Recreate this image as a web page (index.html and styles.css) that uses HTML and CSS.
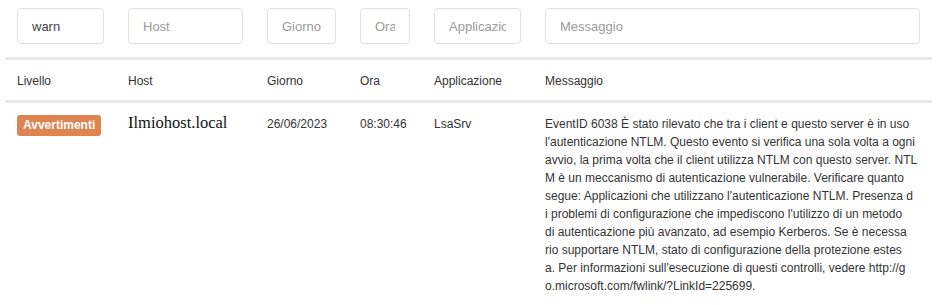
FILE: index.html
```html
<!DOCTYPE html>
<html lang="it">
<head>
<meta charset="utf-8">
<title>Log</title>
<link rel="stylesheet" href="styles.css">
</head>
<body>
<div class="wrap">
<table class="log">
  <colgroup>
    <col class="c-level"><col class="c-host"><col class="c-day"><col class="c-time"><col class="c-app"><col class="c-msg">
  </colgroup>
  <thead>
    <tr class="filters">
      <td><input class="filter" type="text" value="warn"></td>
      <td><input class="filter" type="text" placeholder="Host"></td>
      <td><input class="filter" type="text" placeholder="Giorno"></td>
      <td><input class="filter" type="text" placeholder="Ora"></td>
      <td><input class="filter" type="text" placeholder="Applicazione"></td>
      <td><input class="filter" type="text" placeholder="Messaggio"></td>
    </tr>
    <tr class="heads">
      <th>Livello</th>
      <th>Host</th>
      <th>Giorno</th>
      <th>Ora</th>
      <th>Applicazione</th>
      <th>Messaggio</th>
    </tr>
  </thead>
  <tbody>
    <tr class="row">
      <td><span class="badge">Avvertimenti</span></td>
      <td><span class="host">Ilmiohost.local</span></td>
      <td>26/06/2023</td>
      <td>08:30:46</td>
      <td>LsaSrv</td>
      <td class="msg">EventID 6038 È stato rilevato che tra i client e questo server è in uso<br>l'autenticazione NTLM. Questo evento si verifica una sola volta a ogni<br>avvio, la prima volta che il client utilizza NTLM con questo server. NTL<br>M è un meccanismo di autenticazione vulnerabile. Verificare quanto<br>segue: Applicazioni che utilizzano l'autenticazione NTLM. Presenza d<br>i problemi di configurazione che impediscono l'utilizzo di un metodo<br>di autenticazione più avanzato, ad esempio Kerberos. Se è necessa<br>rio supportare NTLM, stato di configurazione della protezione estes<br>a. Per informazioni sull'esecuzione di questi controlli, vedere http://g<br>o.microsoft.com/fwlink/?LinkId=225699.</td>
    </tr>
  </tbody>
</table>
</div>
</body>
</html>
```
FILE: styles.css
```css
html, body {
  margin: 0;
  padding: 0;
  background: #fff;
}
body {
  font-family: "Liberation Sans", Arial, sans-serif;
  font-size: 12px;
  color: #333;
}
.wrap {
  padding: 0 5px;
}
.log {
  width: 927px;
  table-layout: fixed;
  border-collapse: collapse;
  border-spacing: 0;
}
.c-level { width: 111px; }
.c-host { width: 139px; }
.c-day { width: 93px; }
.c-time { width: 74px; }
.c-app { width: 111px; }
.c-msg { width: 399px; }

.log td, .log th {
  padding: 12px 12px 10px;
  line-height: 18px;
  text-align: left;
  vertical-align: top;
  font-weight: normal;
}
.filters td {
  padding: 8px 12px 13px;
  border-bottom: 3px solid #e8e8e8;
}
.heads th {
  border-bottom: 3px solid #e8e8e8;
}
.filter {
  display: block;
  box-sizing: border-box;
  width: 100%;
  height: 36px;
  margin: 0;
  padding: 0 14px;
  border: 1px solid #e0e0e0;
  border-radius: 4px;
  font-family: "Liberation Sans", Arial, sans-serif;
  font-size: 13px;
  color: #444;
  background: #fff;
  outline: none;
}
.filter::placeholder {
  color: #9a9a9a;
  opacity: 1;
}
.badge {
  display: inline-block;
  vertical-align: top;
  padding: 4px 6px 5px;
  line-height: 12px;
  font-size: 12px;
  font-weight: bold;
  color: #fff;
  background: #dd8450;
  border-radius: 3px;
  white-space: nowrap;
}
.host {
  font-family: "Liberation Serif", "Times New Roman", serif;
  font-size: 16.5px;
  line-height: 12px;
  color: #111;
}
.msg {
  word-break: break-all;
}
```
